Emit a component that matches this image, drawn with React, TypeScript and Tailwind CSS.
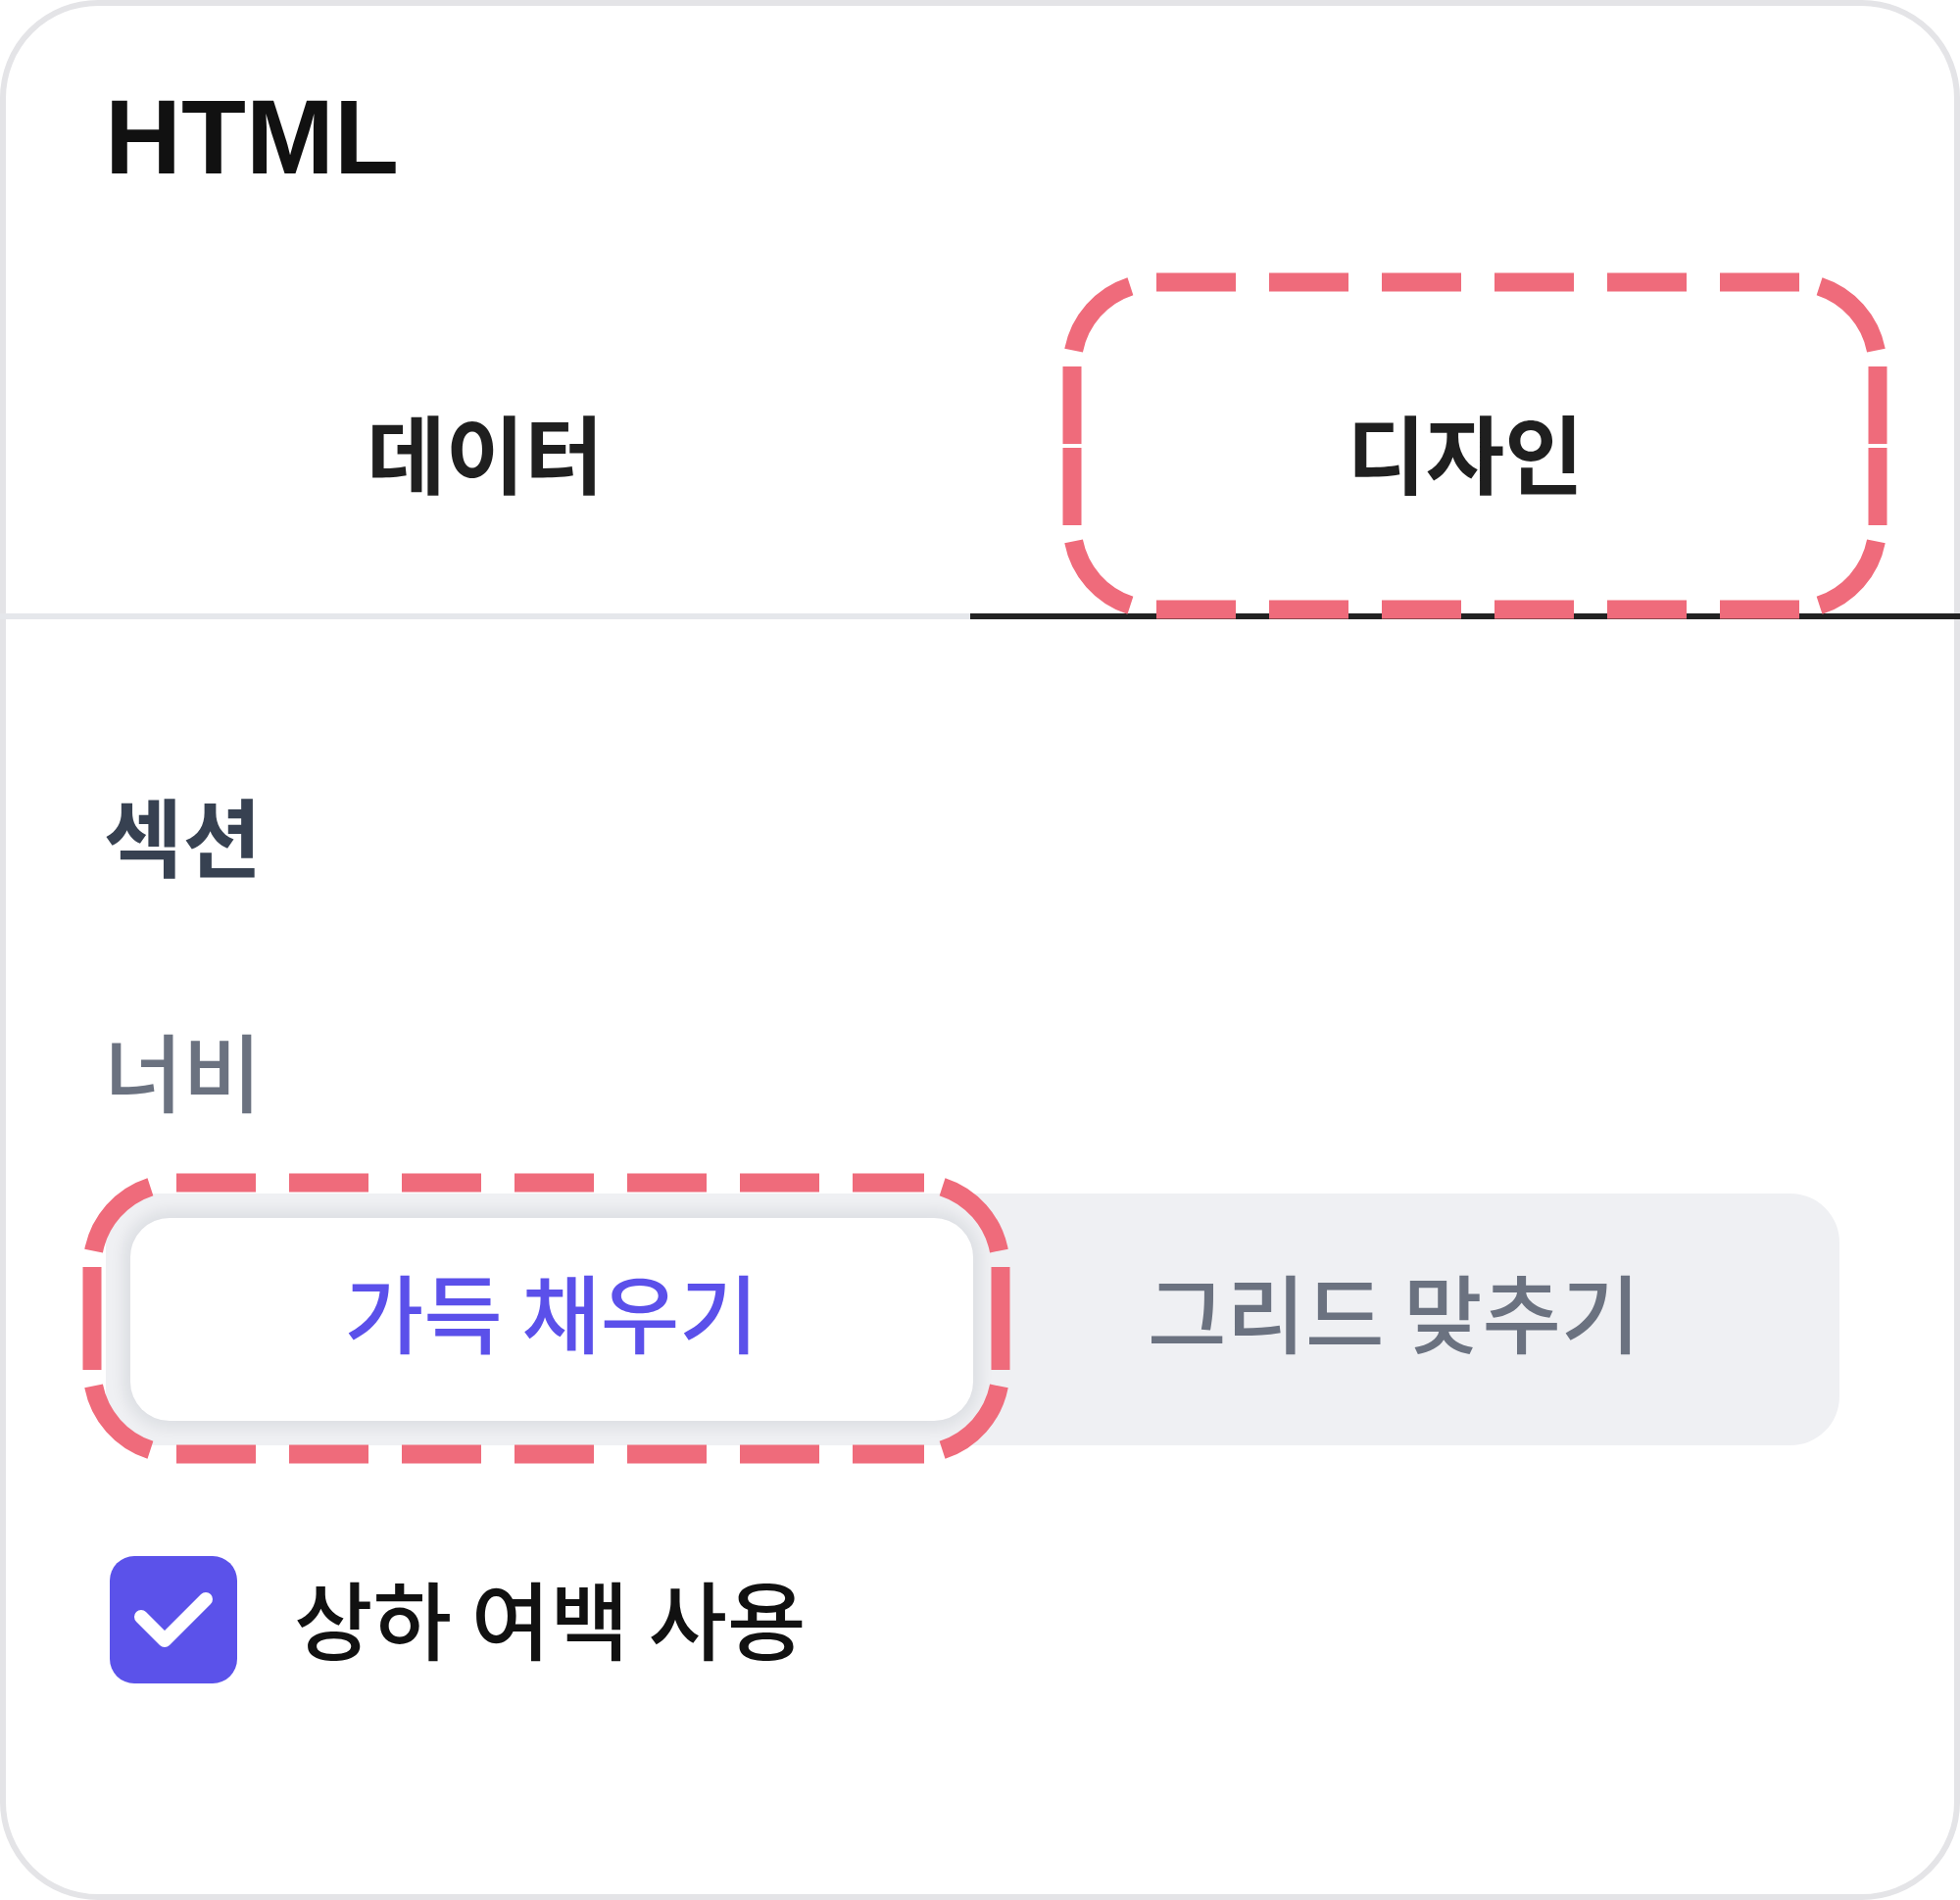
import React from "react";

const PINK = "#ef6b7b";

function dashRect(
  x: number,
  y: number,
  w: number,
  h: number,
  r: number,
  dash: number,
  gap: number,
  split: boolean
): string[] {
  const d: string[] = [];
  const endX = x + w - r + 8;
  for (let s = x + r; s < x + w - r; s += dash + gap) {
    const e = Math.min(s + dash, endX);
    d.push(`M ${s} ${y} L ${e} ${y}`);
    d.push(`M ${s} ${y + h} L ${e} ${y + h}`);
  }
  const L = h - 2 * r;
  const sides = split
    ? [
        [y + r, y + r + L / 2 - 2],
        [y + r + L / 2 + 2, y + h - r],
      ]
    : [[y + r, y + h - r]];
  for (const [a, b] of sides) {
    d.push(`M ${x} ${a} L ${x} ${b}`);
    d.push(`M ${x + w} ${a} L ${x + w} ${b}`);
  }
  const a1 = (18 * Math.PI) / 180;
  const a2 = (79 * Math.PI) / 180;
  const corners: [number, number, number, number, number][] = [
    [x + r, y + r, -1, -1, 0],
    [x + w - r, y + r, 1, -1, 1],
    [x + r, y + h - r, -1, 1, 1],
    [x + w - r, y + h - r, 1, 1, 0],
  ];
  for (const [cx, cy, sx, sy, sw] of corners) {
    const p1x = cx + sx * r * Math.sin(a1);
    const p1y = cy + sy * r * Math.cos(a1);
    const p2x = cx + sx * r * Math.sin(a2);
    const p2y = cy + sy * r * Math.cos(a2);
    d.push(`M ${p1x} ${p1y} A ${r} ${r} 0 0 ${sw} ${p2x} ${p2y}`);
  }
  return d;
}

const kr = "font-['Noto_Sans_CJK_KR','Noto_Sans',sans-serif]";

export default function App() {
  const r1 = dashRect(1094, 288, 822, 334, 86, 81, 34, true);
  const r2 = dashRect(94, 1207, 927, 277, 86, 81, 34, false);
  return (
    <div className="relative w-[2000px] h-[1939px] bg-white overflow-hidden">
      <div className="w-[2000px] h-[1939px] rounded-[100px] border-[6px] border-[#e4e4e7] bg-white">
        <div className="pl-[101px] pt-[80px]">
          <h1 className="font-['Liberation_Sans',Arial,sans-serif] text-[108px] leading-[108px] font-bold text-[#111111]">
            HTML
          </h1>
        </div>

        <div className="mt-[106px] -mx-[6px] flex h-[332px] border-b-[6px] border-[#e5e7eb]">
          <div className="w-[990px] shrink-0 h-[332px] -mb-[6px] border-b-[6px] border-transparent flex items-center justify-center pb-[6px]">
            <span className={`${kr} text-[87.5px] leading-[87.5px] font-semibold text-[#1f1f1f]`}>데이터</span>
          </div>
          <div className="flex-1 h-[332px] -mb-[6px] border-b-[6px] border-[#222222] flex items-center justify-center pb-[6px]">
            <span className={`${kr} text-[87.5px] leading-[87.5px] font-semibold text-[#1f1f1f]`}>디자인</span>
          </div>
        </div>

        <div className="pl-[100px] pt-[175px] flex flex-col items-start">
          <div className={`${kr} text-[87.5px] leading-[87.5px] font-semibold text-[#374151]`}>섹션</div>
          <div className={`${kr} mt-[152px] text-[87.5px] leading-[87.5px] font-medium text-[#6b7280]`}>너비</div>

          <div className="mt-[84px] ml-[2px] w-[1769px] h-[257px] rounded-[50px] bg-[#eff0f3] p-[25px] flex">
            <div className="flex-1 rounded-[40px] bg-white shadow-[0_0_14px_8px_rgba(17,24,39,0.07)] flex items-center justify-center pb-[20px]">
              <span className={`${kr} text-[87.5px] leading-[87.5px] font-medium text-[#5b50ea]`}>가득 채우기</span>
            </div>
            <div className="flex-1 flex items-center justify-center pb-[20px]">
              <span className={`${kr} text-[87.5px] leading-[87.5px] font-medium text-[#6b7280]`}>그리드 맞추기</span>
            </div>
          </div>

          <div className="mt-[113px] ml-[6px] flex items-center gap-[58px]">
            <div className="w-[130px] h-[130px] rounded-[25px] bg-[#5b52ea] flex items-center justify-center">
              <svg width="130" height="130" viewBox="0 0 130 130">
                <polyline
                  points="32,62 56,86 98,44"
                  fill="none"
                  stroke="#ffffff"
                  strokeWidth="14"
                  strokeLinecap="round"
                  strokeLinejoin="round"
                />
              </svg>
            </div>
            <span className={`${kr} text-[87.5px] leading-[87.5px] font-medium text-[#111111] pb-[6px]`}>상하 여백 사용</span>
          </div>
        </div>
      </div>

      <svg
        className="absolute left-0 top-0 pointer-events-none"
        width="2000"
        height="1939"
        viewBox="0 0 2000 1939"
      >
        {[...r1, ...r2].map((d, i) => (
          <path key={i} d={d} fill="none" stroke={PINK} strokeWidth="19" strokeLinecap="butt" />
        ))}
      </svg>
    </div>
  );
}
